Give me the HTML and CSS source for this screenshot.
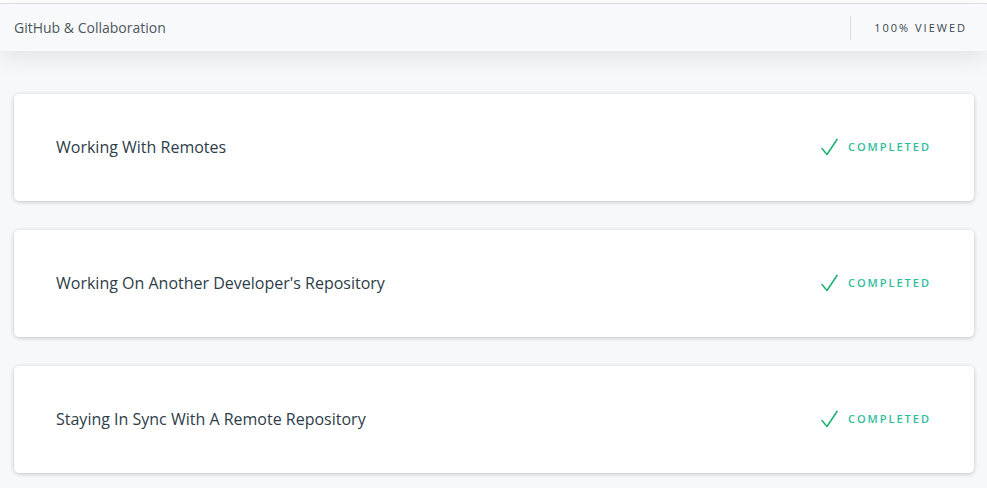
FILE: index.html
```html
<!DOCTYPE html>
<html lang="en">
<head>
<meta charset="utf-8">
<title>GitHub &amp; Collaboration</title>
<link rel="stylesheet" href="styles.css">
</head>
<body>
<div class="topstrip"></div>
<header class="header">
  <div class="header-title">GitHub &amp; Collaboration</div>
  <div class="header-right">
    <span class="divider"></span>
    <span class="progress">100% Viewed</span>
  </div>
</header>
<main class="list">
  <div class="card">
    <div class="card-title">Working With Remotes</div>
    <div class="status">
      <svg class="check" width="17" height="18" viewBox="0 0 17 18"><path d="M1 10.5 L6 16.5 L16 1.5" fill="none" stroke="#20b472" stroke-width="1.6" stroke-linecap="round" stroke-linejoin="round"/></svg>
      <span class="status-text">Completed</span>
    </div>
  </div>
  <div class="card">
    <div class="card-title">Working On Another Developer's Repository</div>
    <div class="status">
      <svg class="check" width="17" height="18" viewBox="0 0 17 18"><path d="M1 10.5 L6 16.5 L16 1.5" fill="none" stroke="#20b472" stroke-width="1.6" stroke-linecap="round" stroke-linejoin="round"/></svg>
      <span class="status-text">Completed</span>
    </div>
  </div>
  <div class="card">
    <div class="card-title">Staying In Sync With A Remote Repository</div>
    <div class="status">
      <svg class="check" width="17" height="18" viewBox="0 0 17 18"><path d="M1 10.5 L6 16.5 L16 1.5" fill="none" stroke="#20b472" stroke-width="1.6" stroke-linecap="round" stroke-linejoin="round"/></svg>
      <span class="status-text">Completed</span>
    </div>
  </div>
</main>
</body>
</html>
```
FILE: styles.css
```css
html, body {
  margin: 0;
  padding: 0;
}
body {
  background: #f7f8fa;
  font-family: "Open Sans", "Noto Sans", sans-serif;
  color: #2e3d49;
  height: 488px;
  overflow: hidden;
}
.topstrip {
  height: 3px;
  background: #ffffff;
  border-bottom: 1px solid #dfe2e5;
}
.header {
  position: relative;
  height: 47px;
  background: #f8f9fa;
  display: flex;
  align-items: center;
  justify-content: space-between;
  padding: 0 20px 0 14px;
  box-shadow: 0 6px 24px rgba(0, 0, 0, 0.09);
}
.header-title {
  font-size: 14px;
  color: #4b5761;
}
.header-right {
  display: flex;
  align-items: center;
  gap: 23px;
}
.divider {
  width: 1px;
  height: 24px;
  background: #dcdfe2;
}
.progress {
  font-size: 11px;
  font-weight: 500;
  letter-spacing: 2px;
  text-transform: uppercase;
  color: #3a4650;
}
.list {
  display: flex;
  flex-direction: column;
  gap: 29px;
  padding: 43px 13px 0 14px;
}
.card {
  height: 107px;
  background: #ffffff;
  border-radius: 5px;
  box-shadow: 0 1px 4px rgba(0, 0, 0, 0.22);
  display: flex;
  align-items: center;
  justify-content: space-between;
  padding: 0 43px 2px 42px;
  box-sizing: border-box;
}
.card-title {
  font-size: 16px;
  font-weight: 500;
  color: #2e3d49;
}
.status {
  display: flex;
  align-items: center;
  gap: 10px;
}
.check {
  display: block;
}
.status-text {
  font-size: 11px;
  font-weight: 600;
  letter-spacing: 2px;
  text-transform: uppercase;
  color: #2ebc9f;
}
```
